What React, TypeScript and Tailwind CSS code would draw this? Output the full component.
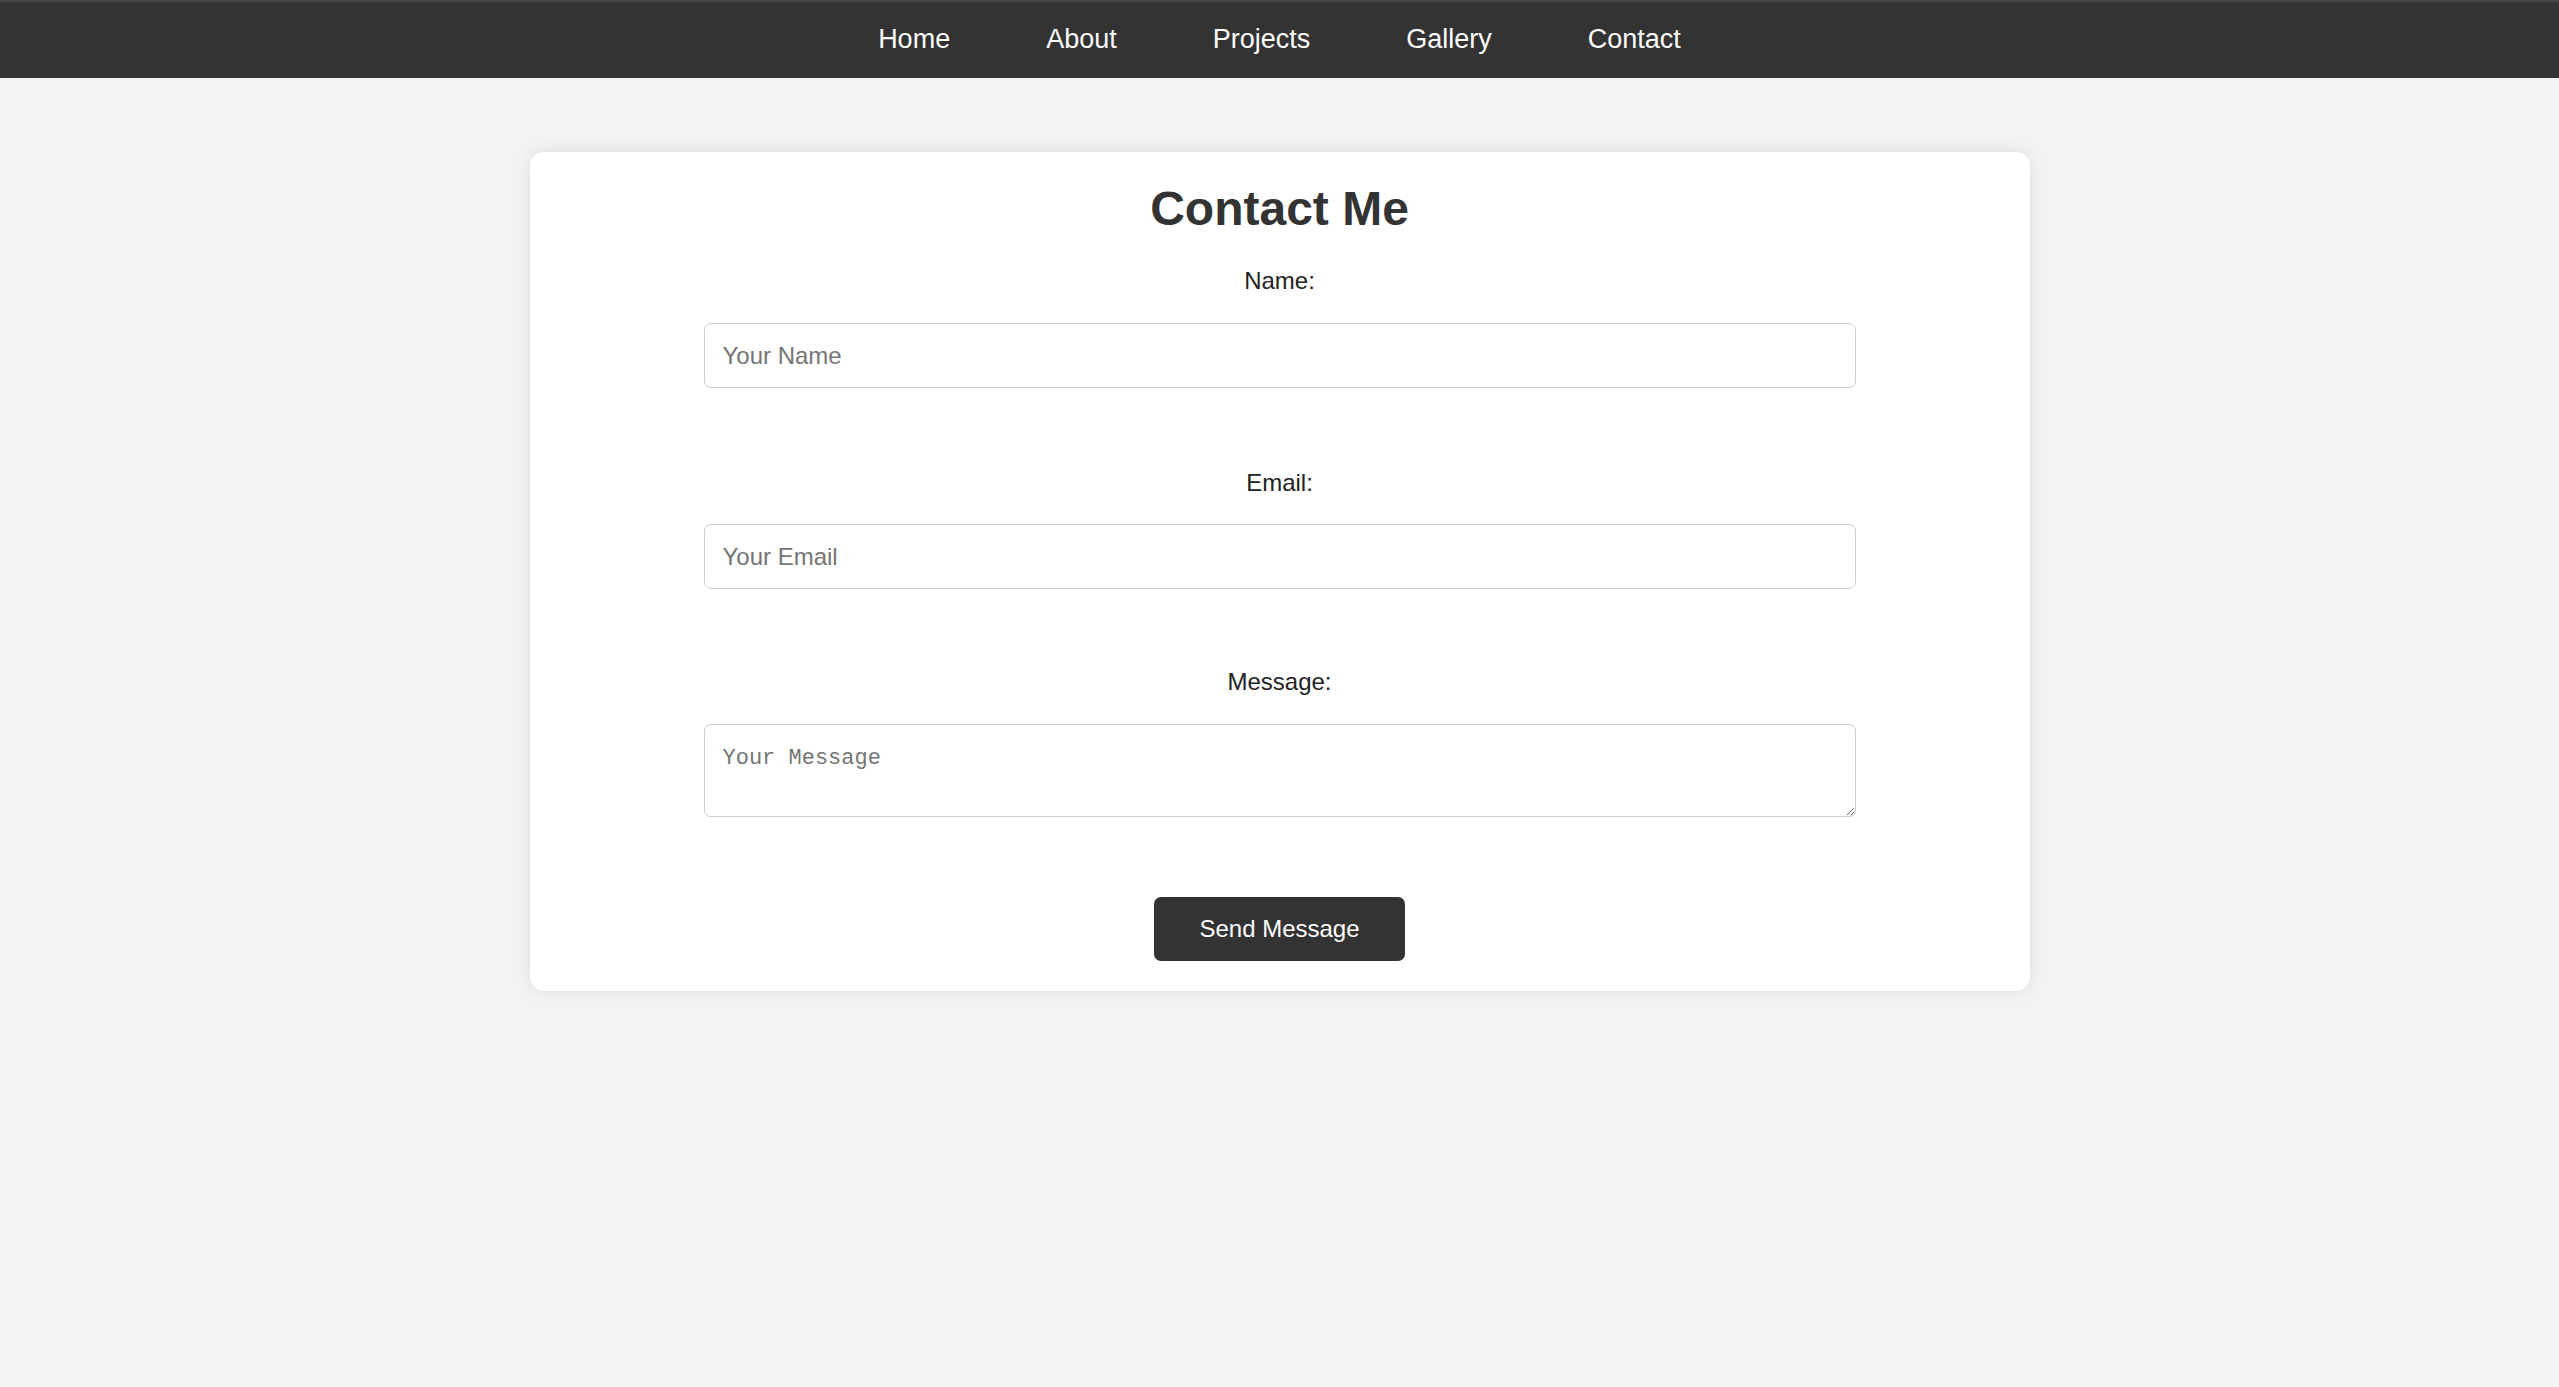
const links = ["Home", "About", "Projects", "Gallery", "Contact"];

function App() {
  return (
    <div className="min-h-[1387px] bg-[#f3f3f3] font-['Liberation_Sans',Arial,sans-serif] text-[#333]">
      <nav className="h-[78px] bg-[#333] border-t-2 border-[#43474d] flex justify-center items-center">
        {links.map((l) => (
          <a
            key={l}
            href="#"
            className="px-12 text-[27px] text-white leading-[31px] -mt-[2px]"
          >
            {l}
          </a>
        ))}
      </nav>

      <section className="w-[1500px] mx-auto mt-[74px] bg-white rounded-[14px] shadow-[0_0_15px_rgba(0,0,0,0.1)] pt-[29px] pb-[30px] px-[30px]">
        <h1 className="text-[48px] font-bold leading-[55px] text-center text-[#333]">
          Contact Me
        </h1>
        <form className="w-[1152px] mx-auto flex flex-col items-center">
          <label className="mt-[31px] text-[24px] leading-[28px] text-[#222]">Name:</label>
          <input
            type="text"
            placeholder="Your Name"
            className="mt-[28px] w-full h-[65px] px-[18px] text-[24px] border-[1.5px] border-[#ccc] rounded-[7px] placeholder:text-[#757575] outline-none"
          />
          <label className="mt-[81px] text-[24px] leading-[28px] text-[#222]">Email:</label>
          <input
            type="email"
            placeholder="Your Email"
            className="mt-[27px] w-full h-[65px] px-[18px] text-[24px] border-[1.5px] border-[#ccc] rounded-[7px] placeholder:text-[#757575] outline-none"
          />
          <label className="mt-[79px] text-[24px] leading-[28px] text-[#222]">Message:</label>
          <textarea
            placeholder="Your Message"
            className="mt-[28px] w-full h-[93px] px-[18px] pt-[21px] pb-[10px] text-[22px] leading-[26px] font-['Liberation_Mono',monospace] border-[1.5px] border-[#ccc] rounded-[7px] placeholder:text-[#757575] outline-none"
          />
          <button
            type="button"
            className="mt-[80px] h-[64px] px-[45px] bg-[#333] text-white text-[24px] rounded-[7px]"
          >
            Send Message
          </button>
        </form>
      </section>
    </div>
  );
}

export default App;
